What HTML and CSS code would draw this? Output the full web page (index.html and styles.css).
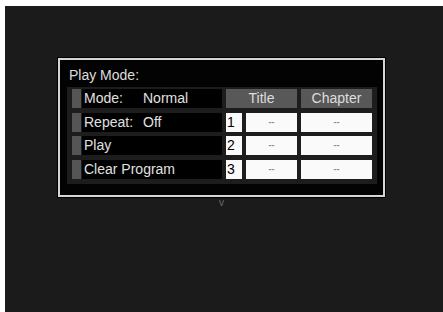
FILE: index.html
```html
<!DOCTYPE html>
<html>
<head>
<meta charset="utf-8">
<link rel="stylesheet" href="styles.css">
</head>
<body>
<div class="screen">
  <div class="panel">
    <div class="title">Play Mode:</div>
    <div class="table">
      <div class="ind"></div>
      <div class="label"><span class="key">Mode:</span><span>Normal</span></div>
      <div class="head head-title">Title</div>
      <div class="head">Chapter</div>

      <div class="ind"></div>
      <div class="label"><span class="key">Repeat:</span><span>Off</span></div>
      <div class="num">1</div>
      <div class="cell">--</div>
      <div class="cell">--</div>

      <div class="ind"></div>
      <div class="label">Play</div>
      <div class="num">2</div>
      <div class="cell">--</div>
      <div class="cell">--</div>

      <div class="ind"></div>
      <div class="label">Clear Program</div>
      <div class="num">3</div>
      <div class="cell">--</div>
      <div class="cell">--</div>
    </div>
  </div>
  <div class="more">v</div>
</div>
</body>
</html>
```
FILE: styles.css
```css
html, body {
  margin: 0;
  padding: 0;
  background: #ffffff;
}
body {
  width: 443px;
  height: 312px;
  overflow: hidden;
  font-family: "Liberation Sans", Arial, sans-serif;
}
.screen {
  margin: 6px 0 0 5px;
  width: 438px;
  height: 306px;
  background: #1b1b1b;
  padding-top: 52px;
  box-sizing: border-box;
}
.panel {
  margin-left: 53px;
  width: 327px;
  box-sizing: border-box;
  border: 2px solid #d6d6d6;
  box-shadow: 0 0 0 1px #000;
  background: #030303;
  padding: 7px 6px 11px 7px;
}
.title {
  color: #dcdcdc;
  font-size: 14px;
  line-height: 17px;
  margin-left: 2px;
  margin-bottom: 3px;
}
.table {
  background: #1d1d1d;
  padding: 2px 5px 5px 5px;
  display: grid;
  grid-template-columns: 6px 140px 16px 51px 71px;
  grid-auto-rows: 19px;
  column-gap: 4px;
  row-gap: 4.67px;
}
.ind {
  background: #555555;
  margin-right: -3px;
}
.label {
  background: #000;
  color: #e0e0e0;
  font-size: 14px;
  line-height: 19px;
  padding-left: 2px;
  display: flex;
  white-space: nowrap;
}
.key {
  width: 59px;
}
.head {
  background: #585858;
  color: #dddddd;
  font-size: 14px;
  line-height: 19px;
  text-align: center;
}
.head-title {
  grid-column: span 2;
}
.num {
  background: #fafafa;
  color: #000;
  font-size: 14px;
  line-height: 19px;
  padding-left: 1px;
}
.cell {
  background: #fafafa;
  color: #8a8a8a;
  font-size: 9px;
  line-height: 19px;
  text-align: center;
  font-weight: bold;
}
.more {
  width: 327px;
  margin-left: 53px;
  text-align: center;
  color: #6a6a6a;
  font-size: 10px;
  line-height: 10px;
  margin-top: 1px;
}
```
